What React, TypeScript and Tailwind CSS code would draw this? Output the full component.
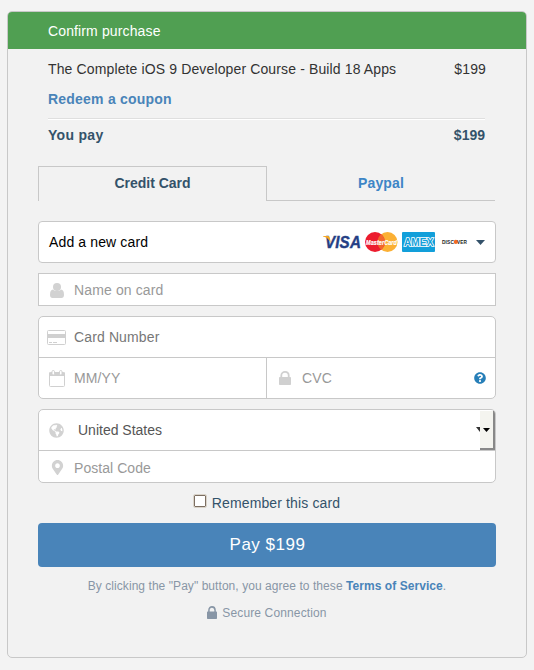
import React from 'react';
import { FaGlobeAmericas, FaMapMarkerAlt, FaQuestionCircle } from 'react-icons/fa';

const UserIcon = () => (
    <svg width="14" height="15" viewBox="0 0 14 15" fill="#d2d2d2">
        <path d="M3 6.6 C1 6.8 0 8.4 0 12 C0 14 1 15 2.5 15 H11.5 C13 15 14 14 14 12 C14 8.4 13 6.8 11 6.6 C9 8.6 5 8.6 3 6.6 Z" />
        <circle cx="7" cy="4" r="4" />
    </svg>
);

const CardIcon = () => (
    <svg width="19" height="15" viewBox="0 0 19 15" fill="none">
        <rect x="0.5" y="0.5" width="18" height="14" rx="1" stroke="#d0d0d0" />
        <path d="M0 4 H19 V8 H0 Z" fill="#d0d0d0" />
        <path d="M2 12.5 H5 M6 12.5 H10" stroke="#d0d0d0" />
    </svg>
);

const CalendarIcon = () => (
    <svg width="16" height="17" viewBox="0 0 16 17" fill="none">
        <rect x="0.5" y="2.5" width="15" height="14" rx="1" stroke="#d0d0d0" />
        <path d="M0 2.5 H16 V6 H0 Z" fill="#d0d0d0" />
        <rect x="3" y="0.5" width="2.5" height="4.5" rx="1.2" fill="#fff" stroke="#d0d0d0" />
        <rect x="10.5" y="0.5" width="2.5" height="4.5" rx="1.2" fill="#fff" stroke="#d0d0d0" />
    </svg>
);

const LockIcon = ({ className }: { className?: string }) => (
    <svg viewBox="0 0 12 14" preserveAspectRatio="none" fill="none" className={className}>
        <path d="M2.3 7 V4.6 C2.3 -0.3 9.7 -0.3 9.7 4.6 V7" stroke="currentColor" strokeWidth="1.8" />
        <rect x="0" y="6" width="12" height="8" rx="0.8" fill="currentColor" />
    </svg>
);

const CardLogos = () => (
    <svg width="147" height="20" viewBox="0 0 147 20" fontFamily="Liberation Sans, sans-serif" fontWeight="bold" fontStyle="italic">
        {/* VISA */}
        <text x="2" y="16" fontSize="16.5" textLength="36" lengthAdjust="spacingAndGlyphs" fill="#253f85" stroke="#253f85" strokeWidth="0.4">VISA</text>
        <path d="M0 4 H4.5 C6 4 6.5 4.6 6.8 6 L8 11 C6.5 7.5 3.6 5 0 4.4 Z" fill="#f5a623" />
        {/* MasterCard */}
        <circle cx="64.5" cy="10" r="10" fill="#fbb034" />
        <circle cx="52" cy="10" r="10" fill="#ec1c2e" />
        <path d="M58.2 2.2 A10 10 0 0 1 58.2 17.8 A10 10 0 0 1 58.2 2.2 Z" fill="#f2662c" />
        <text x="43" y="12.5" fontSize="7" textLength="31" lengthAdjust="spacingAndGlyphs" fill="#fff" stroke="#fff" strokeWidth="0.2">MasterCard</text>
        {/* Amex */}
        <rect x="79" y="0" width="33" height="20" rx="1" fill="#129fda" />
        <text x="81" y="13.8" fontSize="10.5" fontStyle="normal" textLength="29.5" lengthAdjust="spacingAndGlyphs" fill="#129fda" stroke="#fff" strokeWidth="1.6" paintOrder="stroke">AMEX</text>
        {/* Discover */}
        <g fontStyle="normal" fontSize="6" fill="#222">
            <text x="119" y="12" textLength="12" lengthAdjust="spacingAndGlyphs">DISC</text>
            <circle cx="132.8" cy="9.9" r="2.1" fill="#f26b21" />
            <text x="134" y="12" textLength="10" lengthAdjust="spacingAndGlyphs">VER</text>
        </g>
    </svg>
);

interface FieldProps {
    icon: React.ReactNode;
    label: string;
    className: string;
    labelClass?: string;
}

const Field: React.FC<FieldProps> = ({ icon, label, className, labelClass = 'text-[#999]' }) => (
    <div className={`flex items-center ${className}`}>
        <div className="w-[35px] flex justify-center">{icon}</div>
        <span className={labelClass}>{label}</span>
    </div>
);

const App: React.FC = () => {
    return (
        <div className="h-[670px] bg-[#f3f3f3] pt-[11px] pl-[7px] font-['Liberation_Sans',Arial,sans-serif] text-sm tracking-[0.13px]">
            <div className="w-[520px] h-[647px] border border-[#c8c8c8] rounded-[5px] bg-[#f2f2f2] overflow-hidden">
                <div className="h-[37px] bg-[#509f52] text-white pl-10 flex items-center">Confirm purchase</div>

                {/* ORDER SUMMARY */}
                <div className="ml-10 w-[438px] text-[#333]">
                    <div className="flex justify-between h-[41px] items-center pb-0.5">
                        <span>The Complete iOS 9 Developer Course - Build 18 Apps</span>
                        <span>$199</span>
                    </div>
                    <div className="h-7 text-[#4984b9] font-bold leading-[18px] tracking-[0.22px]">Redeem a coupon</div>
                    <div className="h-0.5 mr-px border-t border-[#dfdfdf] border-b border-b-white" />
                    <div className="flex justify-between h-[31px] items-center pb-0.5 text-[#34526a] font-bold">
                        <span className="tracking-[0.3px]">You pay</span>
                        <span className="tracking-normal mr-px">$199</span>
                    </div>
                </div>

                <div className="ml-[30px] w-[458px] pt-[15px]">
                    {/* TABS */}
                    <div className="flex h-[35px] font-bold">
                        <div className="w-[229px] border border-b-0 border-[#c8c8c8] flex items-center justify-center pb-0.5 tracking-normal text-[#34526a]">Credit Card</div>
                        <div className="w-[228px] border-b border-[#c8c8c8] flex items-center justify-center text-[#3d85c6]">Paypal</div>
                    </div>

                    <div className="mt-5 h-[42px] bg-white border border-[#c8c8c8] rounded-[4px] flex items-center pl-2.5 text-black">
                        <span className="flex-1">Add a new card</span>
                        <CardLogos />
                        <svg width="9" height="5" viewBox="0 0 9 5" className="ml-1.5 mr-2.5">
                            <path d="M0 0 H9 L4.5 5 Z" fill="#34526a" />
                        </svg>
                    </div>

                    <Field icon={<UserIcon />} label="Name on card" className="mt-2.5 h-[33px] pt-px bg-white border border-[#c8c8c8]" />

                    {/* CARD DETAILS */}
                    <div className="mt-2.5 h-[83px] bg-white border border-[#c8c8c8] rounded-[5px]">
                        <Field icon={<CardIcon />} label="Card Number" className="h-[41px] border-b border-[#c8c8c8]" labelClass="text-[#777]" />
                        <div className="flex h-10">
                            <Field icon={<CalendarIcon />} label="MM/YY" className="w-[228px] border-r border-[#c8c8c8]" />
                            <Field icon={<LockIcon className="w-3 h-3.5 ml-px text-[#d0d0d0]" />} label="CVC" className="flex-1" />
                            <FaQuestionCircle size={12} className="text-[#277fb8] mt-3.5 mr-[9px]" />
                        </div>
                    </div>

                    {/* COUNTRY / ZIP */}
                    <div className="mt-2.5 h-[74px] bg-white border border-[#c8c8c8] rounded-[5px] overflow-hidden">
                        <div className="flex h-[41px] border-b border-[#c8c8c8]">
                            <Field icon={<FaGlobeAmericas size={15} className="text-[#d2d2d2]" />} label="United States" className="flex-1" labelClass="pl-1 tracking-normal text-[#555]" />
                            <svg width="4" height="5" viewBox="0 0 4 5" className="mt-[17px]">
                                <path d="M0 0 H4 V5 Z" fill="#333" />
                            </svg>
                            <div className="w-[15px] mt-px bg-[#f4f4ef] border-r-2 border-b-2 border-[#888] flex items-center justify-center">
                                <svg width="7" height="4" viewBox="0 0 7 4"><path d="M0 0 H7 L3.5 4 Z" fill="#000" /></svg>
                            </div>
                        </div>
                        <Field icon={<FaMapMarkerAlt size={15} className="ml-0.5 text-[#d2d2d2]" />} label="Postal Code" className="h-[31px] pt-0.5" labelClass="tracking-[0.05px] text-[#999]" />
                    </div>

                    <div className="h-10 flex justify-center text-[#34526a]">
                        <div className="w-3 h-3 mt-3 mr-1.5 bg-white border border-[#7d6f62] rounded-[1px] outline outline-[#d9d3c9]" />
                        <span className="mt-2.5 leading-5">Remember this card</span>
                    </div>

                    <div className="h-11 bg-[#4984b9] rounded-[4px] text-white text-[17px] tracking-[0.5px] flex items-center justify-center pl-px">Pay $199</div>

                    <div className="mt-2.5 text-center text-xs leading-[18px] tracking-[0.06px] text-[#8896a6]">
                        By clicking the "Pay" button, you agree to these <span className="font-bold text-[#4984b9]">Terms of Service</span>.
                    </div>
                    <div className="mt-[9px] flex justify-center items-center text-xs leading-[18px] text-[#8896a6]">
                        <LockIcon className="w-2.5 h-[13px] mr-[5px] mb-0.5" />
                        Secure Connection
                    </div>
                </div>
            </div>
        </div>
    );
};

export default App;
